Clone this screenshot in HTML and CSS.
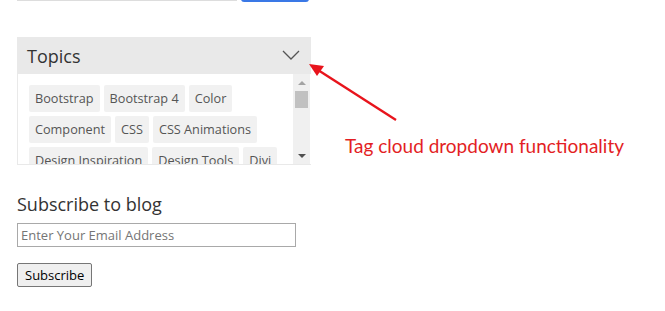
FILE: index.html
```html
<!DOCTYPE html>
<html lang="en">
<head>
    <meta charset="UTF-8">
    <title>Topics widget</title>
    <link rel="stylesheet" href="styles.css">
</head>
<body>
    <div class="sidebar">
        <form class="search">
            <input type="text" class="search-field">
            <button type="button" class="search-btn">Search</button>
        </form>

        <div class="topics">
            <div class="topics-head">
                <span>Topics</span>
                <svg class="chevron" width="18" height="10" viewBox="0 0 18 10">
                    <path d="M1 1 L9 9 L17 1" fill="none" stroke="#555" stroke-width="1.3"/>
                </svg>
            </div>
            <div class="topics-body">
                <div class="tags">
                    <a class="tag">Bootstrap</a>
                    <a class="tag">Bootstrap 4</a>
                    <a class="tag">Color</a>
                    <a class="tag">Component</a>
                    <a class="tag">CSS</a>
                    <a class="tag">CSS Animations</a>
                    <a class="tag">Design Inspiration</a>
                    <a class="tag">Design Tools</a>
                    <a class="tag">Divi</a>
                    <a class="tag">Elementor</a>
                    <a class="tag">Free</a>
                    <a class="tag">Gutenberg</a>
                    <a class="tag">HTML</a>
                    <a class="tag">JavaScript</a>
                    <a class="tag">jQuery</a>
                    <a class="tag">Plugins</a>
                </div>
                <div class="scrollbar">
                    <span class="arrow up"></span>
                    <div class="track"><span class="thumb"></span></div>
                    <span class="arrow down"></span>
                </div>
            </div>
        </div>

        <div class="subscribe">
            <h3>Subscribe to blog</h3>
            <input type="email" class="email" placeholder="Enter Your Email Address">
            <button type="button" class="sub-btn">Subscribe</button>
        </div>
    </div>

    <!-- annotation -->
    <svg class="note-arrow" width="100" height="70" viewBox="0 0 100 70">
        <line x1="88" y1="58" x2="10" y2="8" stroke="#e8141c" stroke-width="2.4"/>
        <polygon points="1,2 16,4 9,14" fill="#e8141c"/>
    </svg>
    <div class="note">Tag cloud dropdown functionality</div>
</body>
</html>
```

FILE: styles.css
```css
body {
    font-family: "Open Sans", Arial, sans-serif;
    margin: 0;
    padding: 0;
    background-color: #fff;
    color: #333;
}
.sidebar {
    width: 294px;
    padding-left: 17px;
}
.search {
    display: flex;
    gap: 4px;
    margin-top: -30px;
    height: 32px;
}
.search-field {
    width: 220px;
    height: 31px;
    box-sizing: border-box;
    border: 1px solid #ddd;
    margin: 0;
}
.search-btn {
    width: 68px;
    height: 32px;
    background-color: #3a78e6;
    border: none;
    border-radius: 0 0 3px 3px;
    color: white;
}
.topics {
    margin-top: 35px;
    width: 294px;
}
.topics-head {
    display: flex;
    align-items: center;
    justify-content: space-between;
    height: 37px;
    padding: 0 11px 0 10px;
    background-color: #e9e9e9;
    font-size: 18px;
    color: #333;
}
.chevron {
    margin-top: -1px;
}
.topics-body {
    display: flex;
    height: 90px;
    border-left: 1px solid #e9e9e9;
    border-bottom: 1px solid #e9e9e9;
}
.tags {
    flex: 1;
    display: flex;
    flex-wrap: wrap;
    gap: 4px;
    align-content: flex-start;
    padding: 11px 7px 0 11px;
    overflow: hidden;
}
.tag {
    display: inline-block;
    height: 27px;
    line-height: 27px;
    padding: 0 6px;
    background-color: #f1f1f1;
    border-radius: 2px;
    font-size: 12.7px;
    color: #555;
    white-space: nowrap;
}
.scrollbar {
    width: 17px;
    margin-right: 1px;
    display: flex;
    flex-direction: column;
    background-color: #f0f0f0;
}
.arrow {
    height: 17px;
    display: flex;
    align-items: center;
    justify-content: center;
}
.arrow.up::before {
    content: "";
    border: 4px solid transparent;
    border-bottom: 4px solid #a3a3a3;
    margin-top: -4px;
}
.arrow.down::before {
    content: "";
    border: 4px solid transparent;
    border-top: 4px solid #505050;
    margin-bottom: -4px;
}
.track {
    flex: 1;
    padding: 0 2px;
}
.thumb {
    display: block;
    height: 17px;
    background-color: #c1c1c1;
}
.subscribe {
    padding-top: 27px;
}
.subscribe h3 {
    font-size: 18px;
    font-weight: normal;
    margin: 0 0 7px 0;
    color: #333;
}
.email {
    display: block;
    width: 279px;
    height: 24px;
    box-sizing: border-box;
    border: 1px solid #a9a9a9;
    padding: 0 3px;
    font-family: "Open Sans", Arial, sans-serif;
    font-size: 13px;
    margin: 0;
}
.email::placeholder {
    color: #757575;
}
.sub-btn {
    margin-top: 16px;
    height: 24px;
    padding: 0 7px;
    font-family: "Open Sans", Arial, sans-serif;
    font-size: 13px;
    color: #000;
    background-color: #efefef;
    border: 1px solid #767676;
    border-radius: 2px;
}
.note-arrow {
    position: absolute;
    left: 308px;
    top: 62px;
}
.note {
    position: absolute;
    left: 345px;
    top: 134px;
    font-family: Lato, "Open Sans", sans-serif;
    font-size: 19px;
    color: #e31e24;
}
```
